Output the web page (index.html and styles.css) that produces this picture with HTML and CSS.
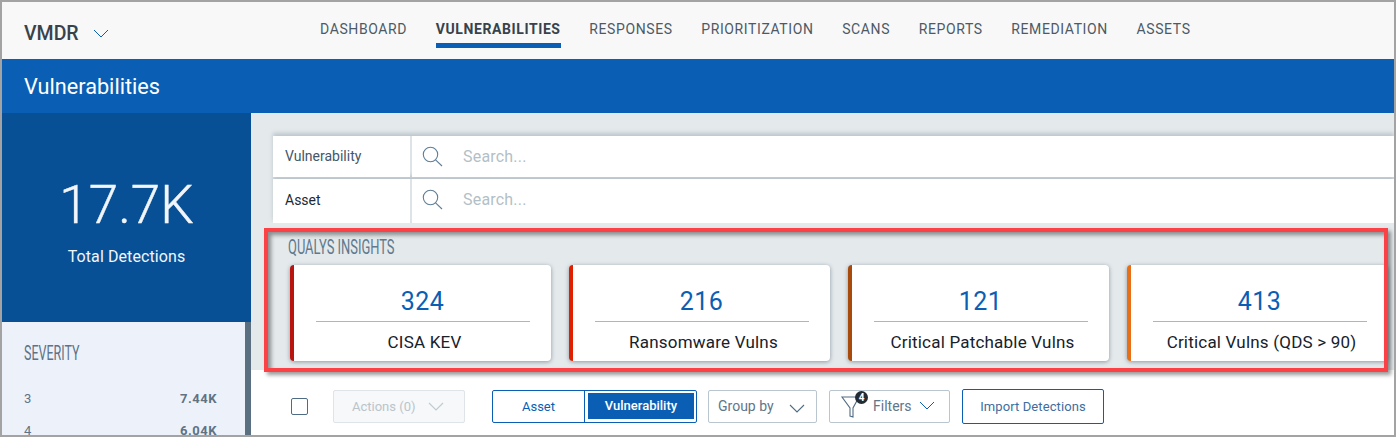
FILE: index.html
```html
<!DOCTYPE html>
<html lang="en">
<head>
<meta charset="utf-8">
<title>Vulnerabilities</title>
<link rel="stylesheet" href="styles.css">
</head>
<body>
<div class="frame">
  <header class="topnav">
    <div class="brand">VMDR
      <svg class="brand-chevron" width="16" height="9" viewBox="0 0 16 9"><path d="M1 1l7 7 7-7" fill="none" stroke="#0a5fb4" stroke-width="1"/></svg>
    </div>
    <nav class="links">
      <a>DASHBOARD</a>
      <a class="active">VULNERABILITIES</a>
      <a>RESPONSES</a>
      <a>PRIORITIZATION</a>
      <a>SCANS</a>
      <a>REPORTS</a>
      <a>REMEDIATION</a>
      <a>ASSETS</a>
    </nav>
  </header>
  <div class="titlebar">Vulnerabilities</div>
  <div class="content">
    <aside class="sidebar">
      <div class="total">
        <div class="total-num">17.7K</div>
        <div class="total-label">Total Detections</div>
      </div>
      <div class="severity">
        <div class="severity-title"><span class="condensed">SEVERITY</span></div>
        <div class="sev-row"><span>3</span><b>7.44K</b></div>
        <div class="sev-row"><span>4</span><b>6.04K</b></div>
      </div>
    </aside>
    <main class="main">
      <div class="search-card">
        <div class="search-row first">
          <div class="search-label">Vulnerability</div>
          <div class="search-input">
            <svg width="21" height="21" viewBox="0 0 21 21"><circle cx="8.5" cy="8.5" r="7.2" fill="none" stroke="#5f7d96" stroke-width="1.1"/><path d="M13.6 13.8l6.4 6.2" stroke="#5f7d96" stroke-width="1.1"/></svg>
            <span>Search...</span>
          </div>
        </div>
        <div class="search-row">
          <div class="search-label dark">Asset</div>
          <div class="search-input">
            <svg width="21" height="21" viewBox="0 0 21 21"><circle cx="8.5" cy="8.5" r="7.2" fill="none" stroke="#5f7d96" stroke-width="1.1"/><path d="M13.6 13.8l6.4 6.2" stroke="#5f7d96" stroke-width="1.1"/></svg>
            <span>Search...</span>
          </div>
        </div>
      </div>
      <section class="insights">
        <div class="highlight"></div>
        <h2 class="insights-title"><span class="condensed">QUALYS INSIGHTS</span></h2>
        <div class="cards">
          <div class="card c-kev"><div class="card-num">324</div><div class="card-label">CISA KEV</div></div>
          <div class="card c-ran"><div class="card-num">216</div><div class="card-label">Ransomware Vulns</div></div>
          <div class="card c-pat"><div class="card-num">121</div><div class="card-label">Critical Patchable Vulns</div></div>
          <div class="card c-qds"><div class="card-num">413</div><div class="card-label">Critical Vulns (QDS &gt; 90)</div></div>
        </div>
      </section>
      <div class="toolbar">
        <span class="checkbox"></span>
        <div class="btn actions">Actions (0)
          <svg width="16" height="9" viewBox="0 0 16 9"><path d="M1 1l7 7 7-7" fill="none" stroke="#c3cbd2" stroke-width="1.2"/></svg>
        </div>
        <div class="segment">
          <span class="seg">Asset</span>
          <span class="seg on">Vulnerability</span>
        </div>
        <div class="btn groupby"><span class="groupby-text">Group by</span>
          <svg class="groupby-chevron" width="16" height="9" viewBox="0 0 16 9"><path d="M1 1l7 7 7-7" fill="none" stroke="#4f6c84" stroke-width="1.1"/></svg>
        </div>
        <div class="btn filters">
          <span class="funnel">
            <svg width="26" height="24" viewBox="0 0 26 24"><path d="M3 2h17l-6 11v9l-3-1v-8z" fill="none" stroke="#4f6c84" stroke-width="1.1"/></svg>
            <i class="badge">4</i>
          </span>
          <span class="filters-text">Filters</span>
          <svg class="filters-chevron" width="16" height="9" viewBox="0 0 16 9"><path d="M1 1l7 7 7-7" fill="none" stroke="#0a5fb4" stroke-width="1"/></svg>
        </div>
        <div class="btn import">Import Detections</div>
      </div>
    </main>
  </div>
</div>
</body>
</html>
```
FILE: styles.css
```css
* { box-sizing: border-box; }
html, body { margin: 0; padding: 0; background: #fff; }
body { font-family: Roboto, "Liberation Sans", sans-serif; }
.frame {
  width: 1396px; height: 437px; border: 2px solid #a3a3a3;
  overflow: hidden; display: flex; flex-direction: column;
}
.condensed { display: inline-block; transform-origin: left center; }
.topnav { height: 57px; flex: none; background: #f8f8f8; display: flex; position: relative; }
.brand {
  width: 318px; flex: none; padding: 21px 0 0 22px;
  font-size: 19.5px; font-weight: 500; line-height: 22px; color: #37424c;
}
.brand-chevron { margin-left: 9px; vertical-align: 2px; }
.links { display: flex; gap: 28.7px; }
.links a {
  display: block; height: 46px; padding-top: 19px;
  font-size: 14px; line-height: 16px; letter-spacing: 0.6px; color: #4d5a65;
}
.links a.active { font-weight: 700; color: #37424c; border-bottom: 5px solid #0a5fb4; }
.titlebar {
  height: 54px; flex: none; background: #0a5fb4; color: #fff;
  padding: 1px 0 0 22px; font-size: 21.7px; line-height: 53px;
}
.content { flex: 1; display: flex; min-height: 0; }
.sidebar { width: 249px; flex: none; display: flex; flex-direction: column; }
.total {
  height: 209px; flex: none; background: #085096; color: #f2f6fb;
  display: flex; flex-direction: column; align-items: center;
}
.total-num { font-size: 53px; font-weight: 300; -webkit-text-stroke: 0.4px #f2f6fb; line-height: 64px; margin-top: 60px; }
.total-label { font-size: 16px; line-height: 20px; margin-top: 10px; letter-spacing: .1px; }
.severity {
  flex: 1; background: #edf2fa; border-right: 6px solid #5a7080;
  padding: 0 28px 0 22px; overflow: hidden;
}
.severity-title { font-size: 20.5px; line-height: 22px; color: #5d7386; margin-top: 20px; margin-bottom: 27px; }
.severity-title .condensed { transform: scaleX(.61); }
.sev-row {
  display: flex; justify-content: space-between; height: 32px;
  font-size: 13px; line-height: 16px; color: #5d7386;
}
.sev-row b { font-weight: 700; letter-spacing: 0.5px; }
.main { flex: 1; min-width: 0; display: flex; flex-direction: column; background: #fff; }
.search-card { padding: 23px 0 0 22px; background: #e4e9ec; flex: none; }
.search-row { display: flex; height: 44px; background: #dde3e7; box-shadow: 0 -3px 4px rgba(120,135,150,.35); }
.search-row.first { height: 43px; }
.search-label {
  width: 137px; flex: none; background: #fff; padding-left: 12px;
  font-size: 14px; line-height: 41px; color: #44566a; height: 44px;
}
.search-label.dark { color: #1d2a35; line-height: 43px; }
.search-input {
  flex: 1; margin-left: 2px; background: #fff; display: flex; align-items: flex-start;
  padding: 10px 0 0 10px; height: 44px;
}
.search-row.first .search-label,
.search-row.first .search-input { height: 41px; }
.search-input span { margin-left: 20px; font-size: 16px; line-height: 21px; color: #b3bfc7; letter-spacing: .2px; }
.insights { height: 147px; flex: none; background: #e4e9ec; position: relative; padding: 13px 0 0 39px; }
.highlight {
  position: absolute; left: 13px; top: 5px; width: 1124px; height: 144px;
  border: 4px solid #fb4046; z-index: 2; pointer-events: none;
  box-shadow: 3px 3px 4px rgba(0,0,0,.4), inset 3px 3px 4px rgba(0,0,0,.4);
}
.insights-title { margin: 0 0 0 -2px; font-size: 20.5px; font-weight: 400; line-height: 22px; color: #60798c; }
.insights-title .condensed { transform: scaleX(.63); }
.cards { display: flex; gap: 18px; margin-top: 7px; }
.card {
  width: 261px; height: 96px; flex: none; background: #fff; border-left: 4px solid;
  border-radius: 4px; padding: 0 21px 0 22px; text-align: center;
  box-shadow: 0 1px 4px rgba(70,85,100,.55);
}
.c-kev { border-left-color: #b9140f; }
.c-ran { border-left-color: #e01e00; }
.c-pat { border-left-color: #a84a0c; }
.c-qds { border-left-color: #e86f16; }
.card-num {
  font-size: 25px; line-height: 28px; height: 57px; padding: 23px 1px 0 0; color: #0a5fb4;
  border-bottom: 1px solid #a9b7c4; letter-spacing: .4px;
}
.card-label { font-size: 17px; line-height: 41px; color: #16212b; letter-spacing: .2px; padding-left: 3px; }
.toolbar { flex: 1; display: flex; align-items: flex-start; padding: 20px 0 0 40px; background: #fff; }
.checkbox {
  width: 17px; height: 17px; flex: none; margin: 8px 25px 0 0;
  border: 1px solid #4f6c84; border-radius: 2px;
}
.btn {
  height: 33px; flex: none; border: 1px solid #b9c6d0; border-radius: 2px; background: #fff;
  display: flex; align-items: center; font-size: 13px; color: #607689;
}
.actions {
  width: 132px; margin-right: 27px; padding-left: 18px; background: #f6f8f9;
  border-color: #dfe4e8; color: #bac4cc; gap: 12px;
}
.segment {
  width: 205px; height: 33px; flex: none; display: flex; border: 1px solid #0a5fb4; border-radius: 2px; margin-right: 11px;
}
.seg { width: 92px; text-align: center; font-size: 13px; line-height: 31px; color: #0a5fb4; border-right: 1px solid #0a5fb4; }
.seg.on {
  width: 106px; height: 26px; margin: 2px 0 0 3px; line-height: 26px; background: #0a5fb4; color: #fff;
  border-right: 0; font-weight: 500;
}
.groupby { width: 109px; margin-right: 12px; padding-left: 9px; font-size: 14px; }
.groupby-text { position: relative; top: -1px; }
.groupby-chevron { margin: 4px 0 0 15px; }
.filters { width: 121px; margin-right: 12px; padding-left: 9px; font-size: 14px; gap: 8px; position: relative; }
.filters-text { margin-top: -1px; }
.filters-chevron { margin: -2px 0 0 -1px; }
.funnel { width: 26px; height: 24px; position: relative; flex: none; }
.badge {
  position: absolute; left: 16px; top: -4px; width: 13px; height: 13px; border-radius: 50%;
  background: #232b33; color: #fff; font-style: normal; font-weight: 700; font-size: 10px; line-height: 13px; text-align: center;
}
.import {
  width: 142px; height: 35px; margin-top: -1px; border-color: #0a5fb4; justify-content: center;
  color: #3e6d9e; font-size: 13px; letter-spacing: .1px;
}
```
